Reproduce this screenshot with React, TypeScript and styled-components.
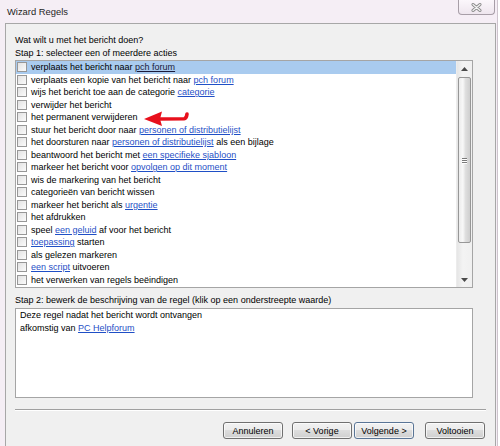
import styled, { createGlobalStyle } from 'styled-components';

const GlobalStyle = createGlobalStyle`
  html, body {
    margin: 0;
    padding: 0;
  }
  body {
    background: #ffffff;
    font-family: "Liberation Sans", Arial, sans-serif;
    font-size: 9px;
    color: #000;
  }
`;

// [tekst] = onderstreepte waarde
const actions = [
  'verplaats het bericht naar [pch forum]',
  'verplaats een kopie van het bericht naar [pch forum]',
  'wijs het bericht toe aan de categorie [categorie]',
  'verwijder het bericht',
  'het permanent verwijderen',
  'stuur het bericht door naar [personen of distributielijst]',
  'het doorsturen naar [personen of distributielijst] als een bijlage',
  'beantwoord het bericht met [een specifieke sjabloon]',
  'markeer het bericht voor [opvolgen op dit moment]',
  'wis de markering van het bericht',
  'categorieën van bericht wissen',
  'markeer het bericht als [urgentie]',
  'het afdrukken',
  'speel [een geluid] af voor het bericht',
  '[toepassing] starten',
  'als gelezen markeren',
  '[een script] uitvoeren',
  'het verwerken van regels beëindigen',
];

const Window = styled.div`
  width: 497px;
  height: 446px;
  background: #f5eef5;
  border-right: 1px solid #cdc4cd;
  display: flex;
  flex-direction: column;
  overflow: hidden;
`;

const TitleBar = styled.div`
  height: 23px;
  flex-shrink: 0;
  display: flex;
  align-items: flex-start;
  padding-left: 7px;
  box-sizing: border-box;
`;

const Title = styled.div`
  margin-top: 5px;
  line-height: 13px;
  font-size: 9.4px;
  color: #1e1e1e;
`;

const CloseButton = styled.div`
  margin-left: auto;
  margin-right: 2px;
  width: 37px;
  height: 15px;
  box-sizing: border-box;
  border: 1px solid #a79ea7;
  border-top: none;
  border-radius: 0 0 4px 4px;
  background: linear-gradient(#fbf7fb, #eee6ee);
  display: flex;
  align-items: center;
  justify-content: center;
`;

const Panel = styled.div`
  flex: 1;
  margin: 0 1px 0 5px;
  border: 1px solid #a7a7a7;
  border-bottom: none;
  background: #f0f0f0;
  padding: 10px 9px 0 9px;
  display: flex;
  flex-direction: column;
`;

const Label = styled.div<{ $top?: number }>`
  height: 13px;
  line-height: 13px;
  white-space: nowrap;
  margin-top: ${(p) => p.$top ?? 0}px;
`;

const ListBox = styled.div`
  position: relative;
  width: 458px;
  height: 228px;
  box-sizing: border-box;
  border: 1px solid #a5a5a5;
  background: #fff;
  display: flex;
`;

const Rows = styled.div`
  flex: 1;
  display: flex;
  flex-direction: column;
  overflow: hidden;
`;

const Row = styled.div<{ $selected?: boolean }>`
  height: 12.5px;
  flex-shrink: 0;
  display: flex;
  align-items: center;
  gap: 4px;
  padding-left: 1px;
  white-space: nowrap;
  background: ${(p) => (p.$selected ? '#a9cbef' : 'transparent')};
`;

const Checkbox = styled.span`
  width: 10px;
  height: 10px;
  flex-shrink: 0;
  box-sizing: border-box;
  border: 1px solid #979797;
  background: linear-gradient(135deg, #e2e2e2, #fbfbfb);
`;

const Link = styled.span<{ $selected?: boolean }>`
  color: ${(p) => (p.$selected ? '#1a1a3a' : '#1f4fc6')};
  text-decoration: underline;
`;

const Scrollbar = styled.div`
  width: 15px;
  flex-shrink: 0;
  background: linear-gradient(90deg, #e6e6e6, #f3f3f3 40%, #f0f0f0);
  border-left: 1px solid #ececec;
  display: flex;
  flex-direction: column;
  align-items: center;
`;

const ScrollArrow = styled.div`
  height: 15px;
  width: 100%;
  flex-shrink: 0;
  display: flex;
  align-items: center;
  justify-content: center;
`;

const Track = styled.div`
  flex: 1;
`;

const Thumb = styled.div`
  width: 13px;
  height: 166px;
  margin-top: 1px;
  flex-shrink: 0;
  box-sizing: border-box;
  border: 1px solid #979797;
  border-radius: 2px;
  background: linear-gradient(90deg, #ececec 0%, #f8f8f8 35%, #dedede 60%, #cfcfcf 100%);
  display: flex;
  flex-direction: column;
  align-items: center;
  justify-content: center;
  gap: 1px;
`;

const Grip = styled.span`
  width: 5px;
  height: 1px;
  background: #7a7a7a;
  box-shadow: 0 1px 0 #fff;
`;

const Annotation = styled.svg`
  position: absolute;
  left: 127px;
  top: 49px;
`;

const DescBox = styled.div`
  width: 458px;
  height: 90px;
  margin-top: 1px;
  box-sizing: border-box;
  border: 1px solid #a5a5a5;
  background: #fff;
  padding: 0 4px;
  line-height: 13px;
`;

const Separator = styled.div`
  margin-top: 11px;
  border-top: 1px solid #a0a0a0;
  border-bottom: 1px solid #ffffff;
`;

const ButtonRow = styled.div`
  display: flex;
  justify-content: flex-end;
  margin-top: 11px;
  padding-right: 1px;
`;

const Button = styled.button<{ $gap?: number; $default?: boolean }>`
  width: 60px;
  height: 17px;
  padding: 0;
  margin-left: ${(p) => p.$gap ?? 0}px;
  border: 1px solid ${(p) => (p.$default ? '#5a7596' : '#707070')};
  border-radius: 3px;
  background: linear-gradient(#f2f2f2 0%, #ebebeb 50%, #dddddd 50%, #cfcfcf 100%);
  box-shadow: inset 0 0 0 1px rgba(255, 255, 255, 0.7);
  font-family: "Liberation Sans", Arial, sans-serif;
  font-size: 9px;
  color: #000;
`;

function renderParts(text: string, selected: boolean) {
  return text.split(/(\[[^\]]+\])/).filter(Boolean).map((part, i) =>
    part.startsWith('[') ? (
      <Link key={i} $selected={selected}>
        {part.slice(1, -1)}
      </Link>
    ) : (
      <span key={i}>{part}</span>
    )
  );
}

const App = () => {
  return (
    <>
      <GlobalStyle />
      <Window>
        <TitleBar>
          <Title>Wizard Regels</Title>
          <CloseButton>
            <svg width="11" height="9" viewBox="0 0 11 9">
              <path d="M2 1.5 L9 7.5 M9 1.5 L2 7.5" stroke="#8a8a8a" strokeWidth="3" strokeLinecap="round" />
              <path d="M2 1.5 L9 7.5 M9 1.5 L2 7.5" stroke="#f4f4f4" strokeWidth="1.2" strokeLinecap="round" />
            </svg>
          </CloseButton>
        </TitleBar>
        <Panel>
          <Label>Wat wilt u met het bericht doen?</Label>
          <Label>Stap 1: selecteer een of meerdere acties</Label>
          <ListBox>
            <Rows>
              {actions.map((a, i) => (
                <Row key={i} $selected={i === 0}>
                  <Checkbox />
                  <span>{renderParts(a, i === 0)}</span>
                </Row>
              ))}
            </Rows>
            <Scrollbar>
              <ScrollArrow>
                <svg width="7" height="4" viewBox="0 0 7 4">
                  <path d="M0 4 L3.5 0 L7 4 Z" fill="#4a4a4a" />
                </svg>
              </ScrollArrow>
              <Thumb>
                <Grip />
                <Grip />
                <Grip />
              </Thumb>
              <Track />
              <ScrollArrow>
                <svg width="7" height="4" viewBox="0 0 7 4">
                  <path d="M0 0 L7 0 L3.5 4 Z" fill="#4a4a4a" />
                </svg>
              </ScrollArrow>
            </Scrollbar>
            <Annotation width="48" height="17" viewBox="0 0 48 17">
              <path d="M1 9 L19 1.5 L17 9 L19 16 Z" fill="#e8101c" />
              <path d="M16 9 L41 8.8 Q43.5 8.5 44 4" stroke="#e8101c" strokeWidth="3.6" fill="none" strokeLinecap="round" />
            </Annotation>
          </ListBox>
          <Label $top={6}>Stap 2: bewerk de beschrijving van de regel (klik op een onderstreepte waarde)</Label>
          <DescBox>
            <div>Deze regel nadat het bericht wordt ontvangen</div>
            <div>
              afkomstig van <Link>PC Helpforum</Link>
            </div>
          </DescBox>
          <Separator />
          <ButtonRow>
            <Button>Annuleren</Button>
            <Button $gap={9}>&lt; Vorige</Button>
            <Button $gap={2} $default>
              Volgende &gt;
            </Button>
            <Button $gap={11}>Voltooien</Button>
          </ButtonRow>
        </Panel>
      </Window>
    </>
  );
};

export default App;
